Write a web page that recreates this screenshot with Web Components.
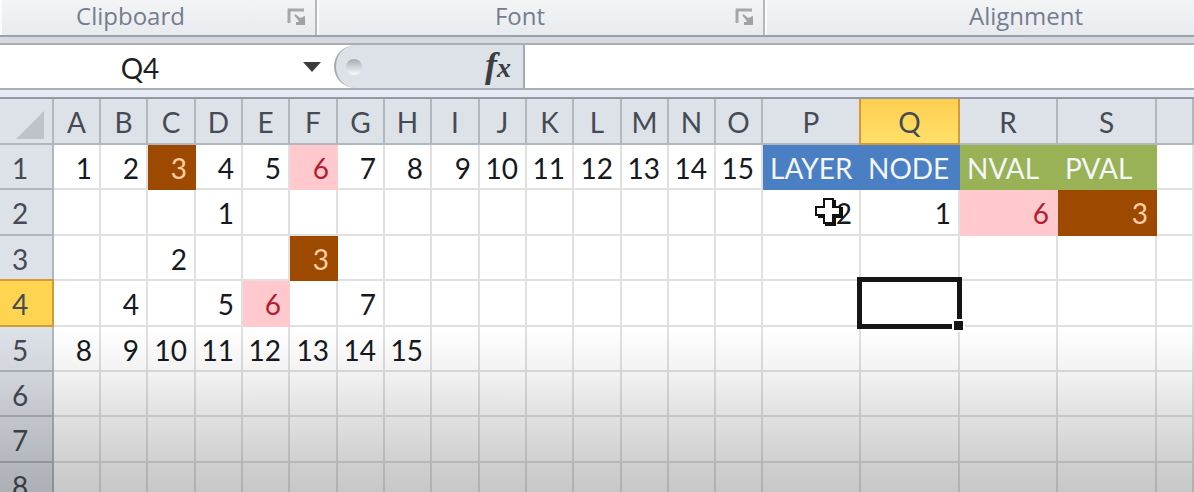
<!DOCTYPE html>
<html lang="en">
<head>
<meta charset="utf-8">
<title>Worksheet</title>
<style>
html, body { height: 100%; }
body { margin: 0; overflow: hidden; background: #fff; font-family: Lato, "Open Sans", sans-serif; }
</style>
</head>
<body>
<work-book></work-book>

<template id="work-book">
  <style>
    :host { display: flex; flex-direction: column; height: 100vh; overflow: hidden; position: relative; }
    :host::after {
      content: ""; position: absolute; inset: auto 0 0 0; height: 164px; pointer-events: none;
      background: linear-gradient(rgba(0,0,0,0), rgba(0,0,0,.05) 27%, rgba(0,0,0,.12) 54%, rgba(0,0,0,.18) 80%, rgba(0,0,0,.22));
    }
    nav { display: flex; flex: none; height: 35px; overflow: hidden; background: linear-gradient(#f3f4f6, #e8ebee); border-bottom: 2px solid #9ba1a9; }
    .clipboard { width: 317px; --inset: 26px; }
    .font { width: 448px; }
    .alignment { width: 564px; }
  </style>
  <nav aria-label="Ribbon groups">
    <ribbon-group class="clipboard">Clipboard</ribbon-group>
    <ribbon-group class="font">Font</ribbon-group>
    <ribbon-group class="alignment">Alignment</ribbon-group>
  </nav>
  <formula-bar></formula-bar>
  <sheet-grid></sheet-grid>
</template>

<template id="ribbon-group">
  <style>
    :host { display: flex; flex: none; box-sizing: border-box; align-items: center; height: 35px; padding: 0 8px 3px 0; border-right: 2px solid #b5b9bf; box-shadow: inset 2px 0 #fafbfc; font: 24px/32px "Open Sans", sans-serif; color: #747d90; }
    span { flex: 1; text-align: center; padding-right: var(--inset, 12px); }
    button { all: unset; width: 20px; height: 20px; display: flex; }
  </style>
  <span><slot></slot></span>
  <button aria-label="More options">
    <svg width="20" height="20" viewBox="0 0 20 20"><path d="M2 17V4H17" fill="none" stroke="#a5a7aa" stroke-width="3"/><path d="M8 8l5 4 5-2v9H9v-3h3z" fill="#a0a2a5"/><path d="M8 9l6 6" stroke="#a0a2a5" stroke-width="2"/></svg>
  </button>
</template>

<template id="formula-bar">
  <style>
    :host { display: flex; flex: none; height: 48px; box-sizing: content-box; height: 47px; border-top: 6px solid #d6dae0; border-bottom: 7px solid #e5eaf4; background: #fff; }
    .bar { display: flex; flex: 1; min-width: 0; box-sizing: border-box; border-top: 2px solid #aaaeb4; border-bottom: 2px solid #a9adb4; }
    input { all: unset; box-sizing: border-box; font: 28px/42px Lato, sans-serif; color: #1c1f24; min-width: 0; padding-top: 2px; }
    .name { width: 280px; text-align: center; }
    button { all: unset; display: flex; align-items: center; justify-content: center; }
    .drop { width: 64px; margin-right: -10px; }
    .tools { display: flex; align-items: center; justify-content: space-between; box-sizing: border-box; width: 191px; padding: 0 12px 0 10px; background: #dde1e8; border: 2px solid #a6aab1; border-width: 0 2px 0 2px; border-radius: 24px 0 0 24px; }
    .knob { width: 16px; height: 16px; border-radius: 50%; background: linear-gradient(#a5a8ac, #d4d7dc 55%, #fafafa); }
    .fx { font: italic bold 36px/36px "Liberation Serif", serif; color: #3b3d40; align-items: baseline; }
    .fx small { font-size: 28px; }
    .formula { flex: 1; padding: 0 8px; }
  </style>
  <div class="bar">
    <input class="name" aria-label="Name box" value="Q4">
    <button class="drop" aria-label="Open name list"><svg width="18" height="10" viewBox="0 0 18 10"><path d="M0 0H18L9 10z" fill="#3c3c3c"/></svg></button>
    <div class="tools"><span class="knob"></span><button class="fx" aria-label="Insert function"><span>f</span><small>x</small></button></div>
    <input class="formula" aria-label="Formula">
  </div>
</template>

<template id="sheet-grid">
  <style>
    :host { display: block; flex: 1; min-height: 0; overflow: hidden; }
    table { table-layout: fixed; width: 100%; border-collapse: separate; border-spacing: 0; border-top: 2px solid #9499a3; font-size: 28px; line-height: 34px; color: #16191d; }
    th, td { box-sizing: border-box; padding: 2px 0 0; height: 45px; font-weight: 400; white-space: nowrap; border: 0 solid #e0e0e0; border-width: 0 2px 2px 0; }
    tr.tall > * { height: 46px; }
    th, .corner { background: #dde1e8; color: #454b54; border-color: #b2b6bf; }
    tbody th { padding-right: 12px; }
    th.on { background: linear-gradient(#ffce50, #ffe068); border-color: #d39a38; box-shadow: -2px 0 #d39a38; }
    tbody th.on { background: #ffd451; box-shadow: 0 -2px #d39a38; }
    td { text-align: right; padding-right: 7px; }
    td.label { text-align: left; padding: 2px 0 0 7px; color: #f4f6fa; }
    td.pink { background: #ffc9cd; border-color: #ffc9cd; color: #b01e30; }
    td.brown { background: #9e4900; border-color: #9e4900; color: #ffcfa5; }
    td.blue { background: #4a7fc4; border-color: #4a7fc4; }
    td.green { background: #99b255; border-color: #99b255; }
    td.active, td.pointed { position: relative; }
    .frame { position: absolute; inset: -4px -4px -4px -4px; border: 5px solid #151515; }
    .frame::after { content: ""; position: absolute; right: -8px; bottom: -8px; width: 9px; height: 9px; background: #151515; border: 2px solid #fff; }
    .cross { position: absolute; left: 50px; top: 6px; }
    .corner svg { display: block; margin: 5px 0 0 16px; }
  </style>
  <table aria-label="Worksheet"><colgroup></colgroup><thead></thead><tbody></tbody></table>
</template>

<script>
class TemplateElement extends HTMLElement {
  constructor() {
    super();
    this.attachShadow({ mode: "open" })
      .append(document.getElementById(this.localName).content.cloneNode(true));
  }
}

const COLUMNS = "ABCDEFGHIJKLMNOPQRS".split("");
const WIDTHS = [47, 47, 48, 47, 47, 48, 47, 47, 48, 47, 47, 48, 47, 47, 47, 98, 99, 98, 99];
const CELLS = {
  P1: "LAYER", Q1: "NODE", R1: "NVAL", S1: "PVAL",
  P2: 2, Q2: 1, R2: 6, S2: 3, D2: 1, C3: 2, F3: 3, B4: 4, D4: 5, E4: 6, G4: 7
};
for (let i = 0; i < 15; i++) CELLS[COLUMNS[i] + 1] = i + 1;
for (let i = 0; i < 8; i++) CELLS[COLUMNS[i] + 5] = i + 8;
const STYLES = {
  C1: "brown", F1: "pink", F3: "brown", E4: "pink", R2: "pink", S2: "brown",
  P1: "label blue", Q1: "label blue", R1: "label green", S1: "label green",
  Q4: "active", P2: "pointed"
};
const EXTRAS = {
  Q4: '<span class="frame"></span>',
  P2: '<svg class="cross" width="32" height="32" viewBox="0 0 32 32"><path d="M13 5h9v7h7v9h-7v8h-9v-8H6v-9h7z" fill="#111" stroke="#111" stroke-width="2"/><path d="M11 3h9v8h7v8h-7v8h-9v-8H3v-8h8z" fill="#fff" stroke="#111" stroke-width="2"/></svg>'
};

class SheetGrid extends TemplateElement {
  constructor() {
    super();
    const $ = s => this.shadowRoot.querySelector(s);
    $("colgroup").innerHTML = '<col style="width:54px">' + WIDTHS.map(w => `<col style="width:${w}px">`).join("") + "<col>";
    $("thead").innerHTML = '<tr class="tall"><td class="corner"><svg width="28" height="28" viewBox="0 0 28 28"><path d="M28 0V28H0z" fill="#bfc3c9"/></svg></td>' +
      COLUMNS.map(c => `<th scope="col"${c === "Q" ? ' class="on"' : ""}>${c}</th>`).join("") + "<th></th></tr>";
    let rows = "";
    for (let r = 1; r <= 8; r++) {
      rows += `<tr${[2, 4, 7].includes(r) ? ' class="tall"' : ""}><th scope="row"${r === 4 ? ' class="on"' : ""}>${r}</th>`;
      for (const c of COLUMNS) {
        const id = c + r;
        rows += `<td class="${STYLES[id] || ""}">${CELLS[id] ?? ""}${EXTRAS[id] || ""}</td>`;
      }
      rows += "<td></td></tr>";
    }
    $("tbody").innerHTML = rows;
  }
}
customElements.define("ribbon-group", class extends TemplateElement {});
customElements.define("formula-bar", class extends TemplateElement {});
customElements.define("sheet-grid", SheetGrid);
customElements.define("work-book", class extends TemplateElement {});
</script>
</body>
</html>
